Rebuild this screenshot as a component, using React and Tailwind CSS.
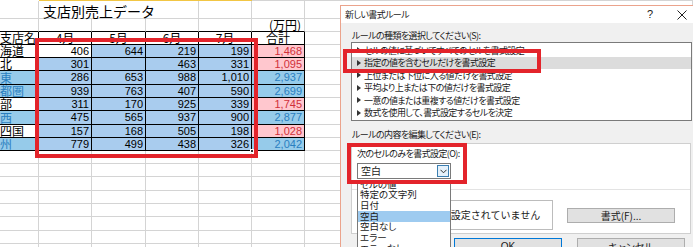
import React from "react";

const GRID = "border-r border-b border-[#d4d4d4]";
const BLK = "border-r border-b border-black";
const GK = "border-r border-b border-r-[#d4d4d4] border-b-black";
const W = ["w-[39px]", "w-[53px]", "w-[54px]", "w-[53px]", "w-[53px]", "w-[53px]"];
const NUM = "font-['Liberation_Sans',sans-serif] text-[11px] leading-none";
const JP = "text-[9px] tracking-[-0.6px] leading-none";

const rows = [
  { a: "海道", n: ["406", "644", "219", "199"], t: "1,468", blue: false },
  { a: "北", n: ["301", "", "463", "331"], t: "1,095", blue: false },
  { a: "東", n: ["286", "653", "988", "1,010"], t: "2,937", blue: true },
  { a: "都圏", n: ["939", "763", "407", "590"], t: "2,699", blue: true },
  { a: "部", n: ["311", "170", "925", "339"], t: "1,745", blue: false },
  { a: "西", n: ["475", "565", "937", "900"], t: "2,877", blue: true },
  { a: "四国", n: ["157", "168", "505", "198"], t: "1,028", blue: false },
  { a: "州", n: ["779", "499", "438", "326"], t: "2,042", blue: true },
];
const dataH = ["h-[13px]", "h-[13px]", "h-[14px]", "h-[13px]", "h-[13px]", "h-[14px]", "h-[13px]", "h-[13px]"];
const emptyH = ["h-[13px]", "h-[13px]", "h-[14px]", "h-[13px]", "h-[13px]", "h-[14px]", "h-[13px]", "h-[13px]"];

function Sheet() {
  return (
    <div className="flex flex-col text-black">
      <div className="flex h-[1px]">
        <div className="w-[39px] shrink-0 bg-white" />
        <div className="w-[213px] shrink-0 bg-[#f2c644]" />
        <div className="flex-1 bg-[#d4d4d4]" />
      </div>
      <div className="flex h-[18px]">
        <div className={`w-[39px] shrink-0 ${GRID}`} />
        <div className={`w-[160px] shrink-0 ${GRID} flex items-center pl-[4px] pt-[2px] text-[14px] leading-none whitespace-nowrap`}>
          支店別売上データ
        </div>
        <div className={`w-[53px] shrink-0 ${GRID}`} />
        <div className={`w-[53px] shrink-0 ${GRID}`} />
        <div className={`flex-1 ${GRID}`} />
      </div>
      <div className="flex h-[13px]">
        {W.map((w, i) => (
          <div key={i} className={`${w} shrink-0 ${GK} flex items-center justify-end pr-[3px] text-[12px] leading-none whitespace-nowrap`}>
            {i === 5 ? "(万円)" : ""}
          </div>
        ))}
        <div className={`flex-1 ${GRID}`} />
      </div>
      <div className="flex h-[13px]">
        <div className={`w-[39px] shrink-0 ${BLK} flex items-center overflow-hidden whitespace-nowrap text-[12px] leading-none`}>支店名</div>
        {["4月", "5月", "6月", "7月", "合計"].map((t, i) => (
          <div key={i} className={`${W[i + 1]} shrink-0 ${BLK} flex items-center justify-center text-[12px] leading-none`}>
            {t}
          </div>
        ))}
        <div className={`flex-1 ${GRID}`} />
      </div>
      {rows.map((r, i) => (
        <div key={i} className={`flex ${dataH[i]}`}>
          <div
            className={`w-[39px] shrink-0 ${BLK} flex items-center overflow-hidden whitespace-nowrap text-[12px] leading-none ${
              r.blue ? "bg-[#96cbea] text-[#2a7fc0]" : "bg-white"
            }`}
          >
            {r.a}
          </div>
          {r.n.map((n, j) => (
            <div
              key={j}
              className={`${W[j + 1]} shrink-0 ${BLK} flex items-center justify-end pr-[2px] ${NUM} ${
                i === 0 && j === 0 ? "bg-white" : "bg-[#a9ccee]"
              }`}
            >
              {n}
            </div>
          ))}
          <div
            className={`w-[53px] shrink-0 ${BLK} flex items-center justify-end pr-[2px] ${NUM} ${
              r.blue ? "bg-[#96cbea] text-[#2a7fc0]" : "bg-[#ffc7ce] text-[#d0303a]"
            }`}
          >
            {r.t}
          </div>
          <div className={`flex-1 ${GRID}`} />
        </div>
      ))}
      {emptyH.map((h, i) => (
        <div key={i} className={`flex ${h}`}>
          {W.map((w, k) => (
            <div key={k} className={`${w} shrink-0 ${GRID}`} />
          ))}
          <div className={`flex-1 ${GRID}`} />
        </div>
      ))}
    </div>
  );
}

function Tri() {
  return (
    <svg width="4" height="6" viewBox="0 0 4 6" className="shrink-0">
      <path d="M0 0 L4 3 L0 6 Z" fill="#333" />
    </svg>
  );
}

const ruleTypes = [
  "セルの値に基づいてすべてのセルを書式設定",
  "指定の値を含むセルだけを書式設定",
  "上位または下位に入る値だけを書式設定",
  "平均より上または下の値だけを書式設定",
  "一意の値または重複する値だけを書式設定",
  "数式を使用して、書式設定するセルを決定",
];

const dropItems = ["セルの値", "特定の文字列", "日付", "空白", "空白なし", "エラー", "エラーなし"];

function Dialog() {
  return (
    <div className="absolute left-[340px] top-[5px] w-[360px] h-[250px] border border-[#eba38c] bg-[#f0f0f0] text-[#1a1a1a] font-['Noto_Sans_CJK_JP',sans-serif] [font-feature-settings:'palt']">
      <div className="flex h-[17px] items-center bg-white pl-[4px] pr-[11px]">
        <span className={JP}>新しい書式ルール</span>
        <span className="ml-auto w-[12px] text-center font-['Liberation_Sans',sans-serif] text-[11px] leading-none">?</span>
        <span className="ml-[20px] flex w-[12px] justify-center">
          <svg width="10" height="10" viewBox="0 0 10 10">
            <path d="M0.5 0.5 L9.5 9.5 M9.5 0.5 L0.5 9.5" stroke="#222" strokeWidth="1" />
          </svg>
        </span>
      </div>
      <div className="pl-[10px]">
        <div className={`flex h-[19px] items-center pt-[5px] pl-[1px] ${JP}`}>ルールの種類を選択してください(S):</div>
        <div className="w-[341px] h-[79px] border border-[#7a7a7a] bg-white pt-px">
          {ruleTypes.map((t, i) => (
            <div
              key={i}
              className={`flex h-[12.5px] items-center gap-[3px] pl-[5px] whitespace-nowrap ${i === 1 ? "bg-[#dcdcdc]" : ""}`}
            >
              <Tri />
              <span className={JP}>{t}</span>
            </div>
          ))}
        </div>
        <div className={`flex h-[22px] items-center pt-[5px] pl-[1px] ${JP}`}>ルールの内容を編集してください(E):</div>
        <div className="w-[340px] h-[91px] border border-[#cfcfcf] bg-white pl-[5px]">
          <div className={`flex h-[18px] items-center ${JP}`}>次のセルのみを書式設定(O):</div>
          <div className="mt-px flex h-[16px] w-[94px] items-center border border-[#7a7a7a] bg-white pl-[3px] pr-[1px] text-[10px] leading-none">
            <span>空白</span>
            <span className="ml-auto flex h-[12px] w-[12px] items-center justify-center border border-[#3c7fb1] bg-[#e5f1fb]">
              <svg width="7" height="5" viewBox="0 0 7 5">
                <path d="M0.5 0.8 L3.5 3.8 L6.5 0.8" stroke="#333" strokeWidth="1" fill="none" />
              </svg>
            </span>
          </div>
          <div className="-ml-[5px] mt-[10px] h-px w-[338px] bg-[#e3e3e3]" />
          <div className="mt-[10px] flex items-start">
            <div className="ml-[81px] flex h-[30px] w-[115px] items-center justify-center border border-[#bcbcbc] bg-white text-[10px] leading-none whitespace-nowrap [font-feature-settings:normal]">
              設定されていません
            </div>
            <div className="ml-[14px] mt-[8px] flex h-[15px] w-[108px] items-center justify-center border border-[#adadad] bg-[#e1e1e1] text-[10px] leading-none">
              書式(F)...
            </div>
          </div>
        </div>
        <div className="mt-[4px] flex">
          <div className="ml-[103px] flex h-[18px] w-[108px] items-center justify-center border border-[#0078d7] bg-[#e1e1e1] font-['Liberation_Sans',sans-serif] text-[10px] leading-none">
            OK
          </div>
          <div className="ml-[15px] flex h-[18px] w-[108px] items-center justify-center border border-[#adadad] bg-[#e1e1e1] text-[10px] leading-none">
            キャンセル
          </div>
        </div>
      </div>
    </div>
  );
}

function DropList() {
  return (
    <div className="absolute left-[357px] top-[182px] h-[70px] w-[94px] overflow-hidden border border-[#7a7a7a] bg-white font-['Noto_Sans_CJK_JP',sans-serif] [font-feature-settings:'palt'] text-[#1a1a1a]">
      <div className="-mt-[4px]">
        {dropItems.map((t, i) => (
          <div
            key={i}
            className={`flex h-[10.7px] items-center pl-[2px] text-[9.5px] leading-none whitespace-nowrap ${
              i === 3 ? "bg-[#9ecbf0]" : ""
            }`}
          >
            {t}
          </div>
        ))}
      </div>
    </div>
  );
}

export default function App() {
  return (
    <div className="relative h-[247px] w-[693px] overflow-hidden bg-white font-['Noto_Sans_CJK_JP',sans-serif]">
      <Sheet />
      <div className="absolute left-[250px] top-[149px] h-[4px] w-[4px] border border-white bg-[#333]" />
      <div className="absolute left-[35px] top-[38px] h-[120px] w-[223px] border-4 border-[#e3242b]" />
      <Dialog />
      <DropList />
      <div className="absolute left-[343px] top-[49px] h-[24px] w-[198px] border-4 border-[#e3242b]" />
      <div className="absolute left-[347px] top-[143px] h-[41px] w-[120px] border-4 border-[#e3242b]" />
    </div>
  );
}
